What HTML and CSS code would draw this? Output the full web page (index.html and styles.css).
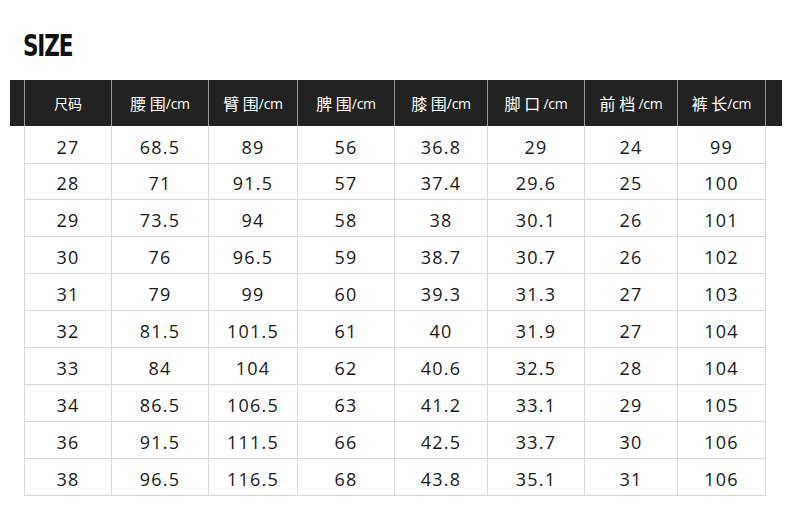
FILE: index.html
```html
<!DOCTYPE html>
<html lang="zh">
<head>
<meta charset="utf-8">
<link rel="stylesheet" href="styles.css">
</head>
<body>
<div class="page">
  <div class="title-wrap"><h1 class="title">SIZE</h1></div>
  <div class="head-bar">
    <div class="grid head">
      <div class="hc"><span class="zh sm">尺码</span></div>
      <div class="hc"><span class="zh">腰 围</span><span class="unit">/cm</span></div>
      <div class="hc"><span class="zh">臂 围</span><span class="unit">/cm</span></div>
      <div class="hc"><span class="zh">脾 围</span><span class="unit">/cm</span></div>
      <div class="hc"><span class="zh">膝 围</span><span class="unit">/cm</span></div>
      <div class="hc"><span class="zh">脚 口</span><span class="unit"> /cm</span></div>
      <div class="hc"><span class="zh">前 档</span><span class="unit"> /cm</span></div>
      <div class="hc"><span class="zh">裤 长</span><span class="unit">/cm</span></div>
    </div>
  </div>
  <div class="grid body">
    <div class="c">27</div><div class="c">68.5</div><div class="c">89</div><div class="c">56</div><div class="c">36.8</div><div class="c">29</div><div class="c">24</div><div class="c">99</div>
    <div class="c">28</div><div class="c">71</div><div class="c">91.5</div><div class="c">57</div><div class="c">37.4</div><div class="c">29.6</div><div class="c">25</div><div class="c">100</div>
    <div class="c">29</div><div class="c">73.5</div><div class="c">94</div><div class="c">58</div><div class="c">38</div><div class="c">30.1</div><div class="c">26</div><div class="c">101</div>
    <div class="c">30</div><div class="c">76</div><div class="c">96.5</div><div class="c">59</div><div class="c">38.7</div><div class="c">30.7</div><div class="c">26</div><div class="c">102</div>
    <div class="c">31</div><div class="c">79</div><div class="c">99</div><div class="c">60</div><div class="c">39.3</div><div class="c">31.3</div><div class="c">27</div><div class="c">103</div>
    <div class="c">32</div><div class="c">81.5</div><div class="c">101.5</div><div class="c">61</div><div class="c">40</div><div class="c">31.9</div><div class="c">27</div><div class="c">104</div>
    <div class="c">33</div><div class="c">84</div><div class="c">104</div><div class="c">62</div><div class="c">40.6</div><div class="c">32.5</div><div class="c">28</div><div class="c">104</div>
    <div class="c">34</div><div class="c">86.5</div><div class="c">106.5</div><div class="c">63</div><div class="c">41.2</div><div class="c">33.1</div><div class="c">29</div><div class="c">105</div>
    <div class="c">36</div><div class="c">91.5</div><div class="c">111.5</div><div class="c">66</div><div class="c">42.5</div><div class="c">33.7</div><div class="c">30</div><div class="c">106</div>
    <div class="c">38</div><div class="c">96.5</div><div class="c">116.5</div><div class="c">68</div><div class="c">43.8</div><div class="c">35.1</div><div class="c">31</div><div class="c">106</div>
  </div>
</div>
</body>
</html>
```
FILE: styles.css
```css
* { box-sizing: border-box; }
html, body { margin: 0; padding: 0; background: #fff; }
.page { width: 790px; height: 528px; }
.title-wrap { height: 80px; padding: 31px 0 0 23px; }
.title {
  margin: 0;
  font-family: "DejaVu Sans", sans-serif;
  font-stretch: condensed;
  font-weight: 900;
  font-size: 30px;
  line-height: 30px;
  letter-spacing: -1.5px;
  color: #111;
  display: inline-block;
  transform: scaleX(0.8);
  transform-origin: left center;
}
.head-bar {
  margin-left: 10px;
  width: 772px;
  height: 46px;
  background: #222222;
  padding-left: 14px;
}
.grid {
  display: grid;
  grid-template-columns: 87px 97px 89px 97px 93px 97px 93px 89px;
}
.head { height: 46px; }
.hc {
  border-left: 1px solid #9a9a9a;
  display: flex;
  align-items: center;
  justify-content: center;
  color: #fff;
}
.hc:nth-child(8n) { border-right: 1px solid #9a9a9a; }
.zh {
  font-family: "Noto Sans CJK SC", sans-serif;
  font-size: 16px;
  white-space: pre;
}
.zh.sm { font-size: 14px; }
.unit {
  font-family: "Open Sans", sans-serif;
  font-size: 14px;
  letter-spacing: -0.3px;
  white-space: pre;
}
.body {
  margin-left: 24px;
  grid-auto-rows: 37px;
  font-family: "Open Sans", sans-serif;
  font-size: 18px;
  letter-spacing: 1.2px;
  color: #1a1a1a;
}
.c {
  border-left: 1px solid #d9d9d9;
  border-bottom: 1px solid #d9d9d9;
  display: flex;
  align-items: center;
  justify-content: center;
  padding-top: 3px;
}
.c:nth-child(8n) { border-right: 1px solid #d9d9d9; }
.c:nth-child(-n+8) { height: 38px; padding-top: 4px; }
```
